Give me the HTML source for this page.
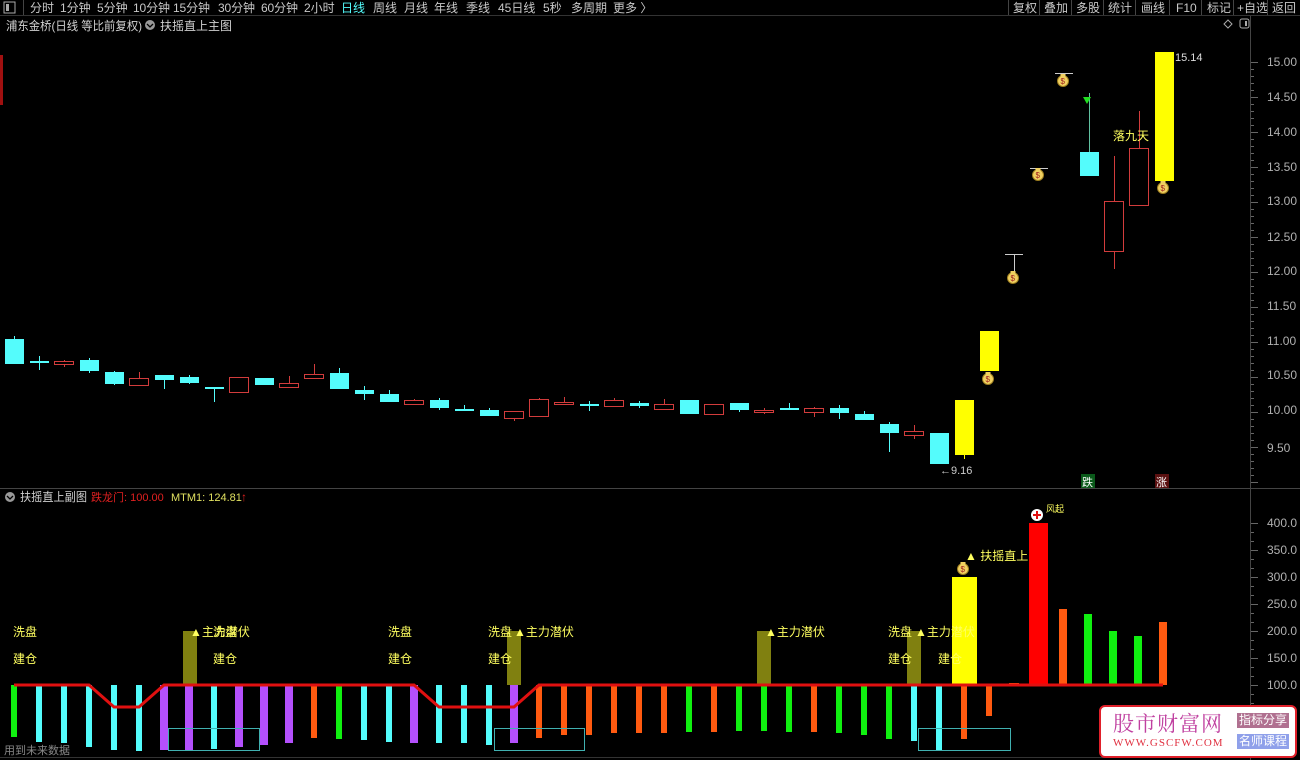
<!DOCTYPE html>
<html><head><meta charset="utf-8">
<style>
html,body{margin:0;padding:0;background:#000;width:1300px;height:760px;overflow:hidden;font-family:"Liberation Sans","Noto Sans CJK SC",sans-serif}
svg{position:absolute;left:0;top:0}
.wm{position:absolute;left:1099px;top:705px;width:194px;height:49px;background:#fff;border:2px solid #e0202a;border-radius:6px}
</style></head><body>
<svg id="s" width="1300" height="760" xmlns="http://www.w3.org/2000/svg" font-family="Liberation Sans, Noto Sans CJK SC, sans-serif">
<rect x="0" y="0" width="1300" height="15" fill="#000"/>
<line x1="0" y1="15.5" x2="1300" y2="15.5" stroke="#333"/>
<rect x="4" y="2" width="11" height="11" fill="none" stroke="#aaa"/><rect x="6" y="4" width="3" height="7" fill="#aaa"/>
<line x1="23.5" y1="0" x2="23.5" y2="15" stroke="#444"/>
<g font-size="12" fill="#c8c8c8">
<text x="30" y="12">分时</text><text x="60" y="12">1分钟</text><text x="97" y="12">5分钟</text><text x="133" y="12" textLength="37">10分钟</text><text x="173" y="12" textLength="37">15分钟</text><text x="218" y="12" textLength="37">30分钟</text><text x="261" y="12" textLength="37">60分钟</text><text x="304" y="12">2小时</text><text x="341" y="12" fill="#54fcfc">日线</text><text x="373" y="12">周线</text><text x="404" y="12">月线</text><text x="434" y="12">年线</text><text x="466" y="12">季线</text><text x="498" y="12">45日线</text><text x="543" y="12">5秒</text><text x="571" y="12">多周期</text><text x="613" y="12">更多 〉</text>
<text x="1013" y="12">复权</text><text x="1044" y="12">叠加</text><text x="1076" y="12">多股</text><text x="1108" y="12">统计</text><text x="1141" y="12">画线</text><text x="1176" y="12">F10</text><text x="1207" y="12">标记</text><text x="1237" y="12">+自选</text><text x="1272" y="12">返回</text>
</g>
<g stroke="#444"><line x1="1008.5" y1="0" x2="1008.5" y2="15"/><line x1="1039.5" y1="0" x2="1039.5" y2="15"/><line x1="1071.5" y1="0" x2="1071.5" y2="15"/><line x1="1103.5" y1="0" x2="1103.5" y2="15"/><line x1="1135.5" y1="0" x2="1135.5" y2="15"/><line x1="1169.5" y1="0" x2="1169.5" y2="15"/><line x1="1201.5" y1="0" x2="1201.5" y2="15"/><line x1="1233.5" y1="0" x2="1233.5" y2="15"/><line x1="1267.5" y1="0" x2="1267.5" y2="15"/></g>
<line x1="1250.5" y1="16" x2="1250.5" y2="760" stroke="#444"/>
<line x1="0" y1="488.5" x2="1300" y2="488.5" stroke="#444"/>
<line x1="0" y1="757.5" x2="1250" y2="757.5" stroke="#333"/>
<rect x="0" y="55" width="3" height="50" fill="#a01010"/>
<text x="6" y="30" font-size="12" fill="#d0d0d0" textLength="136" lengthAdjust="spacingAndGlyphs">浦东金桥(日线 等比前复权)</text>
<circle cx="150" cy="25" r="5" fill="#999"/><path d="M147 24l3 3 3-3" stroke="#000" stroke-width="1.3" fill="none"/>
<text x="160" y="30" font-size="12" fill="#d0d0d0">扶摇直上主图</text>
<path d="M1228 20l4 4-4 4-4-4z" fill="none" stroke="#aaa"/>
<rect x="1240" y="19" width="9" height="9" rx="2" fill="none" stroke="#aaa"/><rect x="1245" y="21" width="2" height="5" fill="#aaa"/>
<g font-size="12" fill="#b0b0b0">
<text x="1267" y="66">15.00</text><text x="1267" y="101">14.50</text><text x="1267" y="136">14.00</text><text x="1267" y="171">13.50</text><text x="1267" y="205">13.00</text><text x="1267" y="241">12.50</text><text x="1267" y="275">12.00</text><text x="1267" y="310">11.50</text><text x="1267" y="345">11.00</text><text x="1267" y="379">10.50</text><text x="1267" y="414">10.00</text><text x="1267" y="452">9.50</text>
<text x="1267" y="527">400.0</text><text x="1267" y="554">350.0</text><text x="1267" y="581">300.0</text><text x="1267" y="608">250.0</text><text x="1267" y="635">200.0</text><text x="1267" y="662">150.0</text><text x="1267" y="689">100.0</text>
</g>
<g id="ticks" stroke="#666"></g>
<g id="cand"></g>
<g id="bars"></g>
<text x="940" y="474" font-size="11" fill="#ccc">←9.16</text>
<text x="1175" y="61" font-size="11" fill="#ddd">15.14</text>
<text x="1113" y="140" font-size="12" fill="#ffff60">落九天</text>
<path d="M1083 97h8l-4 7z" fill="#20e020"/>
<rect x="1081" y="474" width="14" height="14" fill="#0a5a1a"/><text x="1082" y="486" font-size="11" fill="#fff">跌</text>
<rect x="1155" y="474" width="14" height="14" fill="#5a1010"/><text x="1156" y="486" font-size="11" fill="#fff">涨</text>
<circle cx="10" cy="497" r="5" fill="#999"/><path d="M7 496l3 3 3-3" stroke="#000" stroke-width="1.3" fill="none"/>
<text x="20" y="501" font-size="12" fill="#d0d0d0" textLength="67" lengthAdjust="spacingAndGlyphs">扶摇直上副图</text>
<text x="91" y="501" font-size="11" fill="#e02020">跌龙门: 100.00</text>
<text x="171" y="501" font-size="11" fill="#e0e060">MTM1: 124.81</text>
<text x="241" y="501" font-size="12" fill="#e02020">↑</text>
<text x="4" y="754" font-size="11" fill="#888">用到未来数据</text>
<g font-size="12" fill="#ffff60">
<text x="13" y="636">洗盘</text><text x="13" y="663">建仓</text>
<text x="190" y="636">▲主力潜伏</text><text x="213" y="636">洗盘</text><text x="213" y="663">建仓</text>
<text x="388" y="636">洗盘</text><text x="388" y="663">建仓</text>
<text x="488" y="636">洗盘</text><text x="488" y="663">建仓</text><text x="514" y="636">▲主力潜伏</text>
<text x="765" y="636">▲主力潜伏</text>
<text x="888" y="636">洗盘</text><text x="888" y="663">建仓</text><text x="915" y="636">▲主力潜伏</text><text x="938" y="663">建仓</text>
<text x="965" y="560">▲ 扶摇直上</text>
</g>
<g id="over"></g>
<circle cx="1037" cy="515" r="6" fill="#fff"/><path d="M1037 511v8M1033 515h8" stroke="#e01010" stroke-width="2"/>
<text x="1046" y="512" font-size="9" fill="#ffff60">风起</text>
</svg>
<div class="wm">
<div style="position:absolute;left:12px;top:1px;font-size:21px;color:#c040a0;font-family:'Noto Serif CJK SC',serif;letter-spacing:1px">股市财富网</div>
<div style="position:absolute;left:12px;top:30px;font-size:11px;color:#e03040;font-family:'Liberation Serif',serif;letter-spacing:1px">WWW.GSCFW.COM</div>
<div style="position:absolute;left:136px;top:6px;width:52px;height:15px;background:#b07090;color:#fff;font-size:12px;line-height:15px;text-align:center">指标分享</div>
<div style="position:absolute;left:136px;top:27px;width:52px;height:15px;background:#8fa0ea;color:#fff;font-size:12px;line-height:15px;text-align:center">名师课程</div>
</div>
<script>
var NS="http://www.w3.org/2000/svg";
function el(p,t,a){var e=document.createElementNS(NS,t);for(var k in a)e.setAttribute(k,a[k]);document.getElementById(p).appendChild(e);return e;}
for(var y=62;y<488;y+=7)el("ticks","line",{x1:1251,y1:y+.5,x2:(y-62)%35==0?1258:1254,y2:y+.5});
for(var y=523;y<757;y+=9)el("ticks","line",{x1:1251,y1:y+.5,x2:(y-523)%27==0?1258:1254,y2:y+.5});
var C=[[0,'c',339,364,336,364],[1,'c',361,363,356,370],[2,'r',361,364,360,367],[3,'c',360,371,358,373],[4,'c',372,384,371,385],[5,'r',378,385,372,386],[6,'c',375,380,375,389],[7,'c',377,383,375,384],[8,'c',387,389,387,402],[9,'r',377,392,377,392],[10,'c',378,385,378,385],[11,'r',383,387,376,387],[12,'r',374,378,364,378],[13,'c',373,389,368,389],[14,'c',390,394,386,400],[15,'c',394,402,390,402],[16,'r',400,404,399,405],[17,'c',400,408,398,410],[18,'c',409,410,405,411],[19,'c',410,416,408,416],[20,'r',411,418,411,421],[21,'r',399,416,398,417],[22,'r',402,404,397,405],[23,'c',404,406,401,411],[24,'r',400,406,398,406],[25,'c',403,406,401,408],[26,'r',404,409,399,409],[27,'c',400,414,400,414],[28,'r',404,414,404,414],[29,'c',403,410,403,412],[30,'r',410,412,408,414],[31,'c',408,410,403,410],[32,'r',408,412,407,417],[33,'c',408,413,405,419],[34,'c',414,420,411,420],[35,'c',424,433,422,452],[36,'r',431,435,425,439],[37,'c',433,464,433,464],[38,'y',400,455,400,459],[39,'y',331,371,331,371],[43,'c',152,176,93,176],[44,'r',201,251,156,269],[45,'r',148,205,111,205],[46,'y',52,181,52,181]];
C.forEach(function(c){var x=14+25*c[0],col=c[1]=='c'?'#54fcfc':c[1]=='r'?'#d23c3c':'#ffff00';
el("cand","line",{x1:x+.5,y1:c[4],x2:x+.5,y2:c[5],stroke:c[0]==43?'#60c0a0':col});
if(c[1]=='r')el("cand","rect",{x:x-9.5,y:c[2]+.5,width:19,height:Math.max(c[3]-c[2],1),fill:'#000',stroke:col});
else el("cand","rect",{x:x-9,y:c[2],width:19,height:Math.max(c[3]-c[2],2),fill:col});});
[[40,254],[41,168],[42,73]].forEach(function(d){var x=14+25*d[0];el("cand","line",{x1:x-9,y1:d[1]+.5,x2:x+9,y2:d[1]+.5,stroke:'#ccc'});if(d[0]==40)el("cand","line",{x1:x+.5,y1:d[1],x2:x+.5,y2:d[1]+17,stroke:'#ccc'});});
function bag(x,y){el("over","circle",{cx:x,cy:y+1,r:5.5,fill:'#f0d060',stroke:'#a08020'});el("over","rect",{x:x-2.5,y:y-6,width:5,height:3,fill:'#f0d060'});var t=el("over","text",{x:x-2.5,y:y+4,"font-size":8,fill:'#a02020'});t.textContent='$';}
bag(988,378);bag(1013,277);bag(1038,174);bag(1063,80);bag(1163,187);bag(963,568);
var CY='#54fcfc',PU='#b450fc',OR='#ff5a10',GR='#10f010';
var B=[[0,GR,737],[1,CY,742],[2,CY,743],[3,CY,747],[4,CY,750],[5,CY,751],[6,PU,750],[7,PU,750],[8,CY,749],[9,PU,747],[10,PU,745],[11,PU,743],[12,OR,738],[13,GR,739],[14,CY,740],[15,CY,742],[16,PU,743],[17,CY,743],[18,CY,743],[19,CY,745],[20,PU,743],[21,OR,738],[22,OR,735],[23,OR,735],[24,OR,733],[25,OR,733],[26,OR,733],[27,GR,732],[28,OR,732],[29,GR,731],[30,GR,731],[31,GR,732],[32,OR,732],[33,GR,733],[34,GR,735],[35,GR,739],[36,CY,741],[37,CY,750],[38,OR,739],[39,OR,716]];
[7,20,30,36].forEach(function(i){var x=14+25*i+(i==7?1:0);el("bars","rect",{x:x-7,y:631,width:14,height:54,fill:'#808010'});});
B.forEach(function(b){var x=14+25*b[0],w=b[1]==PU?8:6;el("bars","rect",{x:x-w/2,y:685,width:w,height:b[2]-685,fill:b[1]});});
el("bars","rect",{x:952,y:577,width:25,height:108,fill:'#ffff00'});
el("bars","rect",{x:1029,y:523,width:19,height:162,fill:'#ff0000'});
el("bars","rect",{x:1009,y:683,width:10,height:2,fill:OR});
[[1063,OR,609],[1088,GR,614],[1113,GR,631],[1138,GR,636],[1163,OR,622]].forEach(function(b){el("bars","rect",{x:b[0]-4,y:b[2],width:8,height:685-b[2],fill:b[1]});});
el("bars","polyline",{points:"14,685 89,685 114,707 139,707 164,685 414,685 439,707 514,707 539,685 1163,685",fill:'none',stroke:'#e01010','stroke-width':3});
[[168,259],[494,584],[918,1010]].forEach(function(b){el("bars","rect",{x:b[0]+.5,y:728.5,width:b[1]-b[0],height:22,fill:'none',stroke:'#40b0b0'});});
</script>
</body></html>
